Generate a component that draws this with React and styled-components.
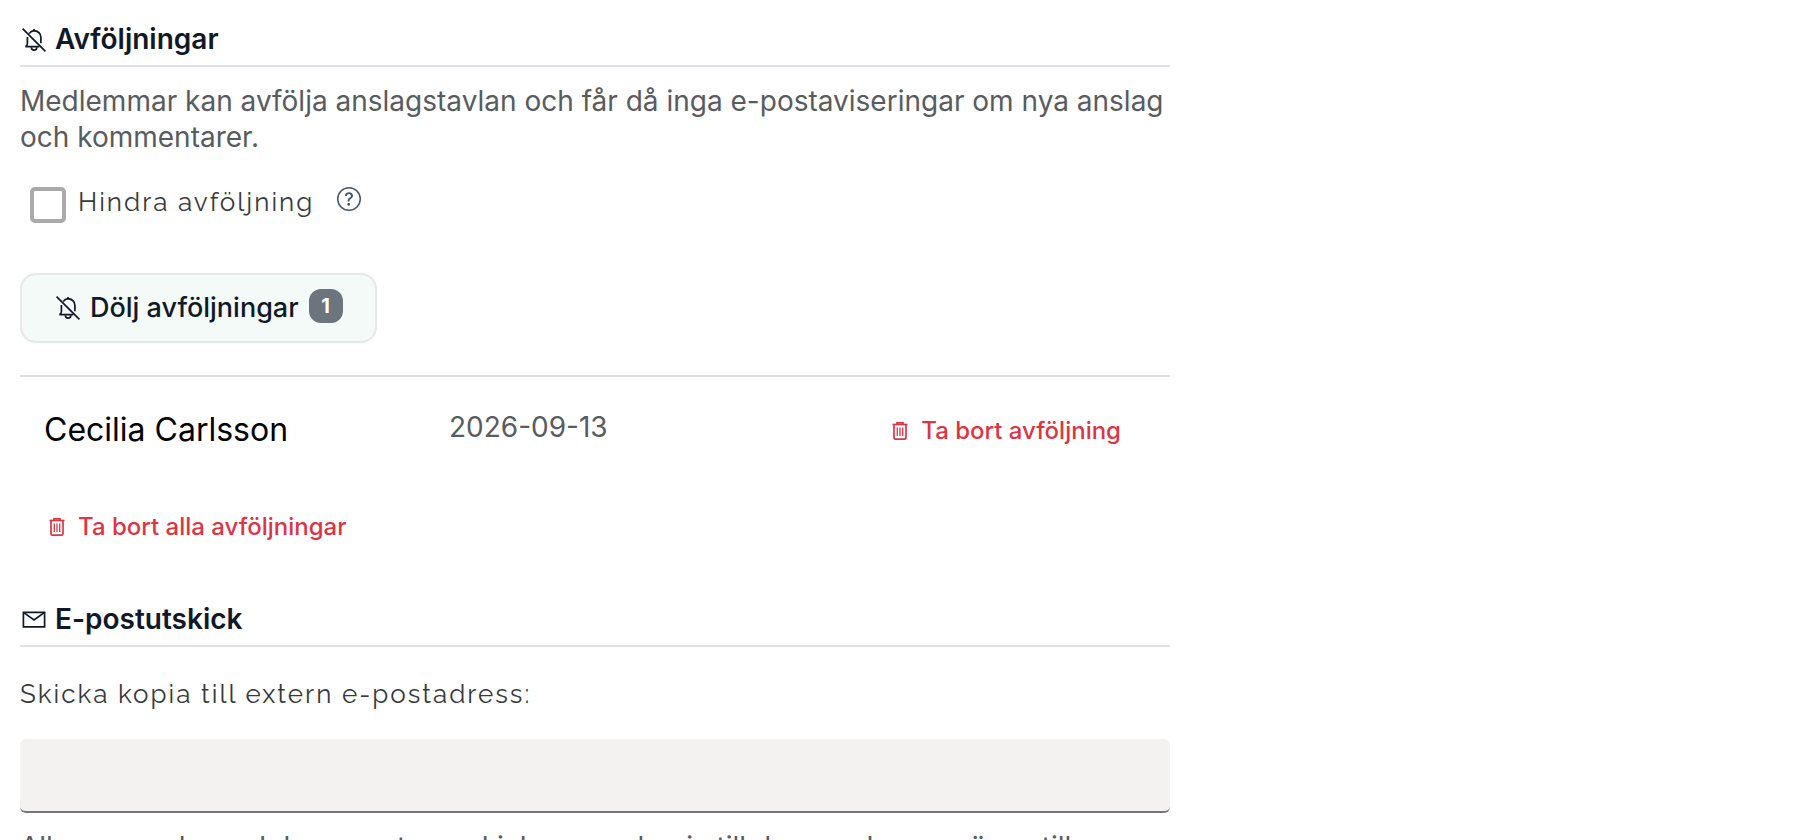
import React from "react";
import styled, { createGlobalStyle } from "styled-components";
import { BsQuestionCircle } from "react-icons/bs";

const GlobalStyle = createGlobalStyle`
  *, *::before, *::after { box-sizing: border-box; }
  html { scrollbar-width: none; }
  body {
    margin: 0;
    background: #fff;
    color: #585b60;
    font: 400 28px/36px Inter, "Liberation Sans", sans-serif;
  }
`;

const Page = styled.main`
  display: flex;
  flex-direction: column;
  width: 65%;
  padding: 17px 0 0 20px;
`;

const Section = styled.section`
  display: flex;
  flex-direction: column;
  align-items: flex-start;
`;

const Heading = styled.h2`
  display: flex;
  align-items: center;
  gap: 9px;
  width: 100%;
  margin: 0;
  padding: 0 0 3px 2px;
  border-bottom: 2px solid #dee2e6;
  color: #111827;
  font-size: 28px;
  font-weight: 600;
  line-height: 45px;
`;

const Text = styled.p`
  margin: 0;
  padding-top: 16px;
`;

const CheckRow = styled.div`
  display: flex;
  align-items: flex-start;
  gap: 12px;
  padding: 29px 0 0 10px;
`;

const Label = styled.label`
  color: #373a3c;
  font-family: Raleway, Lato, sans-serif;
  font-size: 26px;
  font-weight: 400;
  letter-spacing: 2px;
  line-height: 36px;
`;

const Checkbox = styled.input`
  appearance: none;
  width: 36px;
  height: 36px;
  margin: 3px 0 0;
  border: 4px solid #a9a9a9;
  border-radius: 5px;
  background: #fff;
`;

const HelpButton = styled.button`
  display: flex;
  padding: 3px 0 0 11px;
  border: 0;
  background: none;
  color: #475569;
`;

const ToggleButton = styled.button`
  display: flex;
  align-items: center;
  gap: 10px;
  height: 70px;
  margin-top: 50px;
  padding: 0 32px 0 34px;
  border: 2px solid #e5e7eb;
  border-radius: 16px;
  background: #f4faf7;
  color: #111827;
  font: 500 27px/36px Inter, sans-serif;
`;

const Badge = styled.span`
  width: 34px;
  height: 34px;
  margin-bottom: 4px;
  border-radius: 12px;
  background: #6c757d;
  color: #fff;
  font-size: 20px;
  font-weight: 700;
  line-height: 34px;
  text-align: center;
`;

const List = styled.ul`
  width: 100%;
  margin: 32px 0 0;
  padding: 0;
  border-top: 2px solid #dee0e1;
  list-style: none;
`;

const Item = styled.li`
  display: grid;
  grid-template-columns: 405px 1fr auto;
  align-items: center;
  padding: 32px 49px 0 24px;
`;

const Name = styled.span`
  padding-bottom: 2px;
  color: #000;
  font-size: 32px;
  line-height: 42px;
`;

const DateText = styled.time`
  padding-bottom: 8px;
`;

const RemoveButton = styled.button`
  display: flex;
  align-items: center;
  gap: 12px;
  padding: 0;
  border: 0;
  background: none;
  color: #dc3545;
  font: 500 24px/36px Inter, sans-serif;
`;

const ListFooter = styled.div`
  padding: 56px 0 52px 28px;
`;

const FieldLabel = styled(Label)`
  padding: 29px 0 27px;
`;

const Input = styled.input`
  width: 100%;
  height: 74px;
  padding: 0 16px;
  border: 0;
  border-bottom: 2px solid #75787b;
  border-radius: 6px;
  background: #f3f2f1;
  font: inherit;
`;

const Stroke = styled.svg`
  flex: none;
  fill: none;
  stroke: currentColor;
  stroke-width: 1.7;
`;

const BellOff = () => (
  <Stroke width="24" height="24" viewBox="0 0 24 24" aria-hidden="true">
    <path d="M0.6 0.6 L23.4 23.4" />
    <path d="M7.2 5.4 C8.6 3.6 10 2.9 12 2.6 C16.4 3.1 18.9 5.6 18.9 9.6 V15.2" />
    <path d="M5.4 9 V15.4 C5.4 16.8 4.6 18.2 3.4 18.6 H17.4" />
    <path d="M12 2.8 V0.9" />
    <path d="M9.4 19.2 A2.7 2.9 0 0 0 14.8 19.2" />
  </Stroke>
);

const Envelope = () => (
  <Stroke width="24" height="24" viewBox="0 0 24 24" aria-hidden="true">
    <path d="M1.4 4.4 H22.6 V18.8 H1.4 Z" />
    <path d="M1.4 4.4 L12 12 L22.6 4.4" />
  </Stroke>
);

const Trash = () => (
  <Stroke width="18" height="18" viewBox="0 0 18 18" aria-hidden="true">
    <path d="M1.5 2.5 H16.5" />
    <path d="M6 2.4 V0.8 H12 V2.4" />
    <path d="M3 3 V15.6 Q3 17.2 4.6 17.2 H13.4 Q15 17.2 15 15.6 V3" />
    <path d="M6.3 5.4 V14 M9 5.4 V14 M11.7 5.4 V14" strokeWidth="1.3" />
  </Stroke>
);

export default function App() {
  return (
    <>
      <GlobalStyle />
      <Page>
        <Section>
          <Heading><BellOff />Avföljningar</Heading>
          <Text>
            Medlemmar kan avfölja anslagstavlan och får då inga e-postaviseringar om nya anslag och kommentarer.
          </Text>
          <CheckRow>
            <Checkbox id="prevent" type="checkbox" />
            <Label htmlFor="prevent">Hindra avföljning</Label>
            <HelpButton type="button" aria-label="Hjälp"><BsQuestionCircle size={24} /></HelpButton>
          </CheckRow>
          <ToggleButton type="button">
            <BellOff />Dölj avföljningar<Badge>1</Badge>
          </ToggleButton>
          <List>
            <Item>
              <Name>Cecilia Carlsson</Name>
              <DateText dateTime="2026-09-13">2026-09-13</DateText>
              <RemoveButton type="button"><Trash />Ta bort avföljning</RemoveButton>
            </Item>
          </List>
          <ListFooter>
            <RemoveButton type="button"><Trash />Ta bort alla avföljningar</RemoveButton>
          </ListFooter>
        </Section>
        <Section>
          <Heading><Envelope />E-postutskick</Heading>
          <FieldLabel htmlFor="copy">Skicka kopia till extern e-postadress:</FieldLabel>
          <Input id="copy" type="email" />
          <Text>
            Alla nya anslag och kommentarer skickas som kopia till dessa adresser, även till
          </Text>
        </Section>
      </Page>
    </>
  );
}
